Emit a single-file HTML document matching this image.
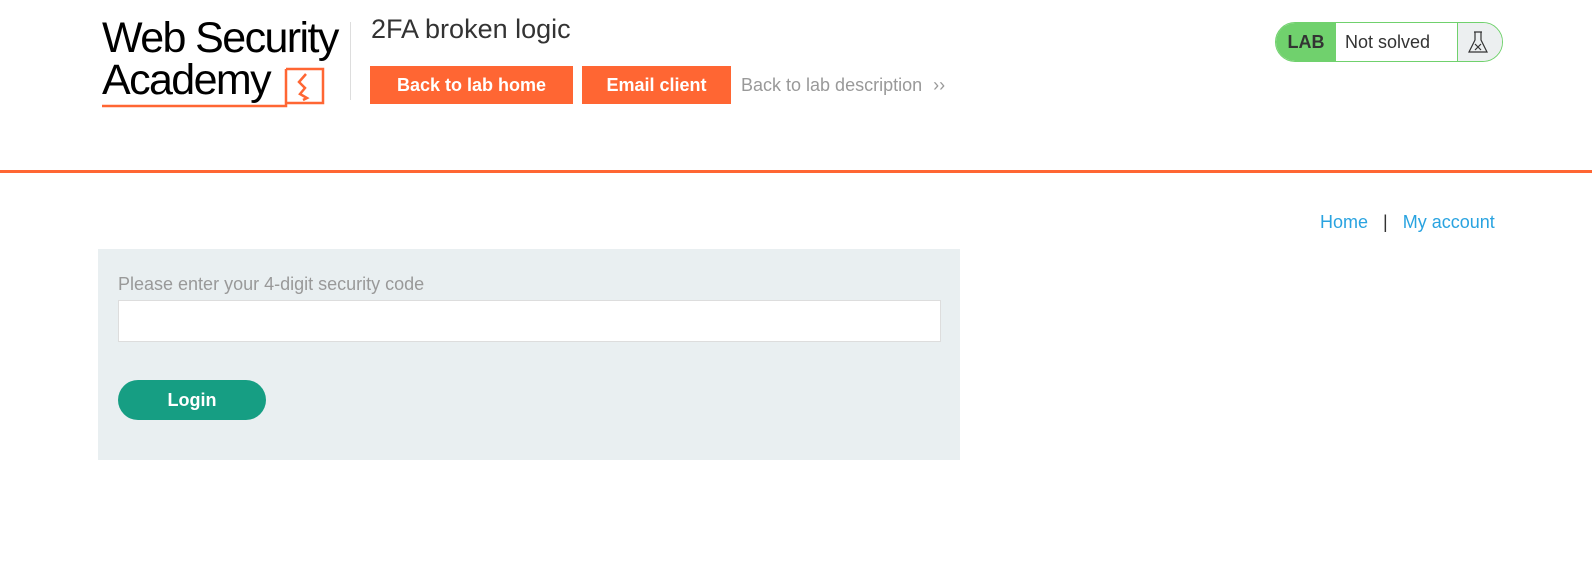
<!DOCTYPE html>
<html><head><style>
body{margin:0;width:1592px;height:562px;background:#fff;font-family:"Liberation Sans",Arial,sans-serif;position:relative;overflow:hidden}
.abs{position:absolute}
.btn{position:absolute;top:66px;height:38px;background:#ff6633;color:#fff;font-weight:bold;font-size:18px;line-height:38px;text-align:center}
</style></head><body>
<div class="abs" style="left:102px;top:17px;font-size:43px;letter-spacing:-1.6px;line-height:42px;color:#000">Web Security<br>Academy</div>
<svg class="abs" style="left:100px;top:66px" width="226" height="45"><path d="M186 3H223V37H186V3M186 37V40H2" fill="none" stroke="#ff6633" stroke-width="2.5"/><path d="M206 8L199 16L205 22L200 28L207 32L203 34" fill="none" stroke="#ff6633" stroke-width="2.5"/></svg>
<div class="abs" style="left:350px;top:22px;width:1px;height:78px;background:#ddd"></div>
<div class="abs" style="left:371px;top:14px;font-size:27px;color:#333">2FA broken logic</div>
<div class="btn" style="left:370px;width:203px">Back to lab home</div>
<div class="btn" style="left:582px;width:149px">Email client</div>
<div class="abs" style="left:741px;top:75px;font-size:18px;color:#999">Back to lab description <span style="margin-left:6px">››</span></div>
<div class="abs" style="left:1275px;top:22px;width:226px;height:38px;border:1px solid #70d16d;border-radius:20px;overflow:hidden;display:flex">
<div style="width:60px;background:#70d16d;font-weight:bold;font-size:18px;line-height:38px;text-align:center;color:#333">LAB</div>
<div style="width:121px;font-size:18px;line-height:38px;padding-left:9px;color:#333;box-sizing:border-box">Not solved</div>
<div style="flex:1;background:#eceff0;border-left:1px solid #70d16d;position:relative"><svg style="position:absolute;left:9px;top:7px" width="22" height="26"><path d="M7 2H15M8 2V10L2 22H20L14 10V2" fill="none" stroke="#333" stroke-width="1.2"/><path d="M8 14L14 20M14 14L8 20" stroke="#333" stroke-width="1.2"/></svg></div></div>
<div class="abs" style="left:0;top:170px;width:1592px;height:3px;background:#ff6633"></div>
<div class="abs" style="left:1320px;top:212px;font-size:18px;color:#29a3e0">Home <span style="color:#333;margin:0 10px">|</span> My account</div>
<div class="abs" style="left:98px;top:249px;width:862px;height:211px;background:#e9eff1"></div>
<div class="abs" style="left:118px;top:274px;font-size:18px;color:#999">Please enter your 4-digit security code</div>
<div class="abs" style="left:118px;top:300px;width:821px;height:40px;background:#fff;border:1px solid #ddd"></div>
<div class="abs" style="left:118px;top:380px;width:148px;height:40px;border-radius:20px;background:#169e83;color:#fff;font-weight:bold;font-size:18px;line-height:40px;text-align:center">Login</div>
</body></html>
